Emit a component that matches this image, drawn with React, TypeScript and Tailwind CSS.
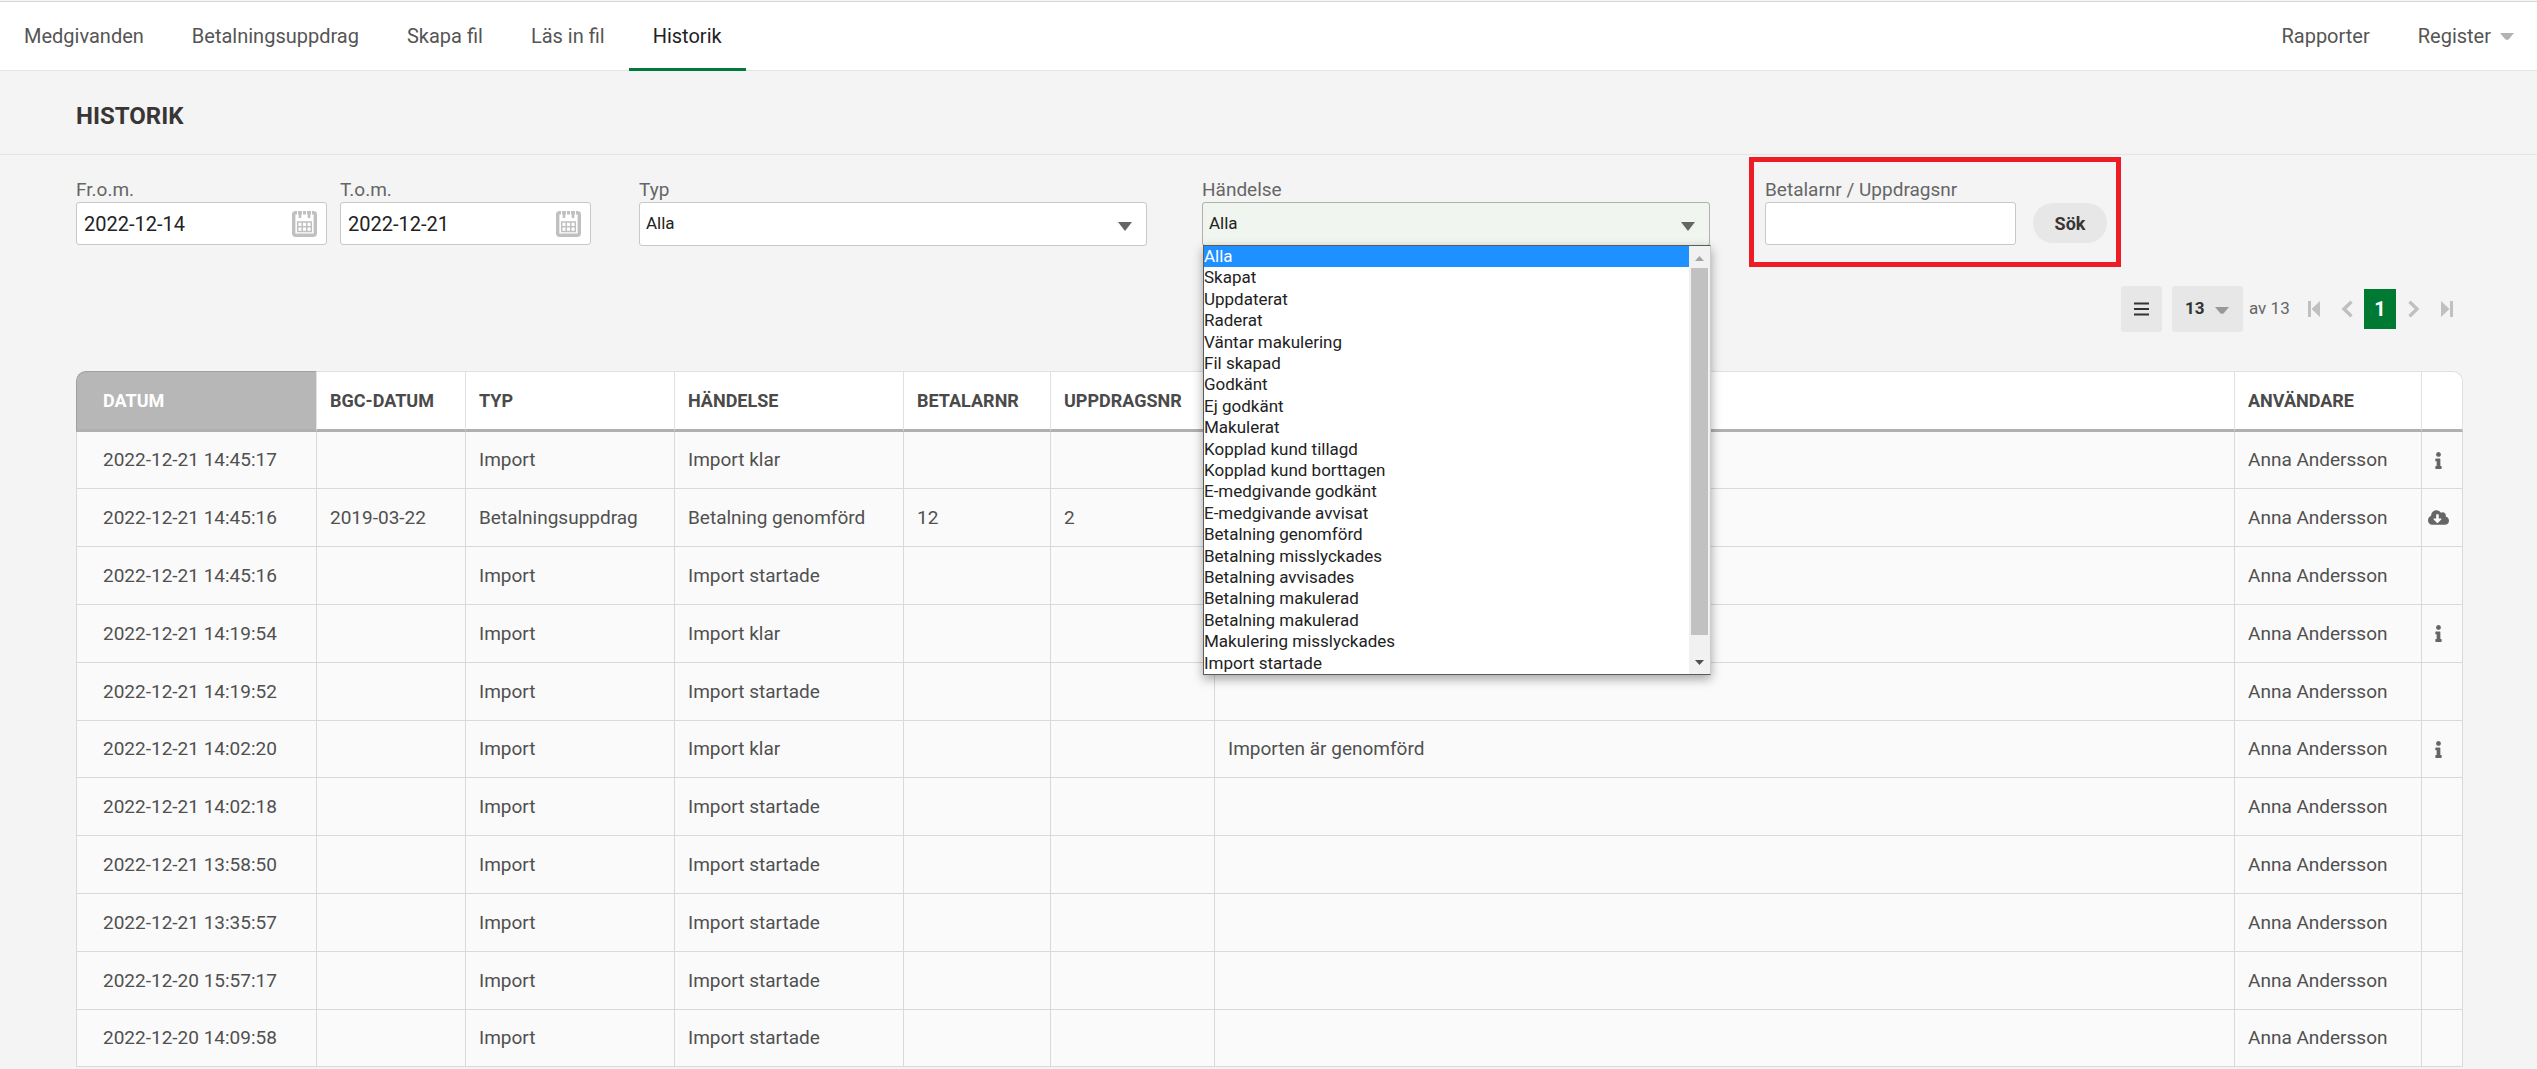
import type { ReactNode } from "react";
import { FaInfo, FaCloudDownloadAlt } from "react-icons/fa";

type Row = {
  date: string;
  bgc?: string;
  type: string;
  event: string;
  payer?: string;
  order?: string;
  message?: string;
  icon?: "info" | "download";
};

const rows: Row[] = [
  { date: "2022-12-21 14:45:17", type: "Import", event: "Import klar", icon: "info" },
  { date: "2022-12-21 14:45:16", bgc: "2019-03-22", type: "Betalningsuppdrag", event: "Betalning genomförd", payer: "12", order: "2", icon: "download" },
  { date: "2022-12-21 14:45:16", type: "Import", event: "Import startade" },
  { date: "2022-12-21 14:19:54", type: "Import", event: "Import klar", icon: "info" },
  { date: "2022-12-21 14:19:52", type: "Import", event: "Import startade" },
  { date: "2022-12-21 14:02:20", type: "Import", event: "Import klar", message: "Importen är genomförd", icon: "info" },
  { date: "2022-12-21 14:02:18", type: "Import", event: "Import startade" },
  { date: "2022-12-21 13:58:50", type: "Import", event: "Import startade" },
  { date: "2022-12-21 13:35:57", type: "Import", event: "Import startade" },
  { date: "2022-12-20 15:57:17", type: "Import", event: "Import startade" },
  { date: "2022-12-20 14:09:58", type: "Import", event: "Import startade" },
];

const events = [
  "Alla", "Skapat", "Uppdaterat", "Raderat", "Väntar makulering", "Fil skapad", "Godkänt",
  "Ej godkänt", "Makulerat", "Kopplad kund tillagd", "Kopplad kund borttagen",
  "E-medgivande godkänt", "E-medgivande avvisat", "Betalning genomförd",
  "Betalning misslyckades", "Betalning avvisades", "Betalning makulerad",
  "Betalning makulerad", "Makulering misslyckades", "Import startade",
];

const navItems = ["Medgivanden", "Betalningsuppdrag", "Skapa fil", "Läs in fil"];

function Caret({ className }: { className: string }) {
  return (
    <svg viewBox="0 0 16 8" className={className} fill="currentColor" aria-hidden="true">
      <path d="M0 0h16L10 7Q8 8.600 6 7Z" />
    </svg>
  );
}

function CalendarIcon() {
  return (
    <svg viewBox="0 0 25 26" className="h-[26px] w-[25px]" fill="none" stroke="#c0c0c0" aria-hidden="true">
      <rect x="1.700" y="1.700" width="21.600" height="22.600" rx="2" strokeWidth="3.400" />
      <path d="M5.500 0v5M10.500 0v5M14.500 0v5M19.500 0v5" stroke="#fff" strokeWidth="1" />
      <path d="M8 2v5M17 2v5" strokeWidth="2.600" />
      <path d="M5.700 11h13.600v9.500H5.700zM5.700 15.700h13.600M10.200 11v9.500M14.800 11v9.500" strokeWidth="1.500" />
    </svg>
  );
}

function DateField({ id, label, value }: { id: string; label: string; value: string }) {
  return (
    <div className="w-[251px] shrink-0">
      <label htmlFor={id} className="block text-[19px] leading-6 text-[#666]">{label}</label>
      <div className="relative">
        <input
          id={id}
          defaultValue={value}
          className="block h-[43px] w-full rounded-[3px] border border-[#c8c8c8] bg-white pl-[7px] text-[20px] text-[#222]"
        />
        <button type="button" aria-label={`Välj datum ${label}`} className="absolute top-[9px] right-[10px]">
          <CalendarIcon />
        </button>
      </div>
    </div>
  );
}

function SelectField({ id, label, open, children }: { id: string; label: string; open?: boolean; children?: ReactNode }) {
  return (
    <div>
      <label htmlFor={id} className="block text-[19px] leading-6 text-[#666]">{label}</label>
      <div className="relative">
        <select
          id={id}
          className={
            "block h-11 w-full appearance-none rounded-[3px] border pl-[6px] text-[17px] text-[#222] " +
            (open ? "border-[#b0b0b0] bg-[#f0f5ef]" : "border-[#c8c8c8] bg-white")
          }
        >
          <option>Alla</option>
        </select>
        <svg viewBox="0 0 14 9" className="pointer-events-none absolute top-[20px] right-[15px] h-[9px] w-[14px]" aria-hidden="true">
          <path d="M0 0h14L7 9Z" fill="#666" />
        </svg>
        {children}
      </div>
    </div>
  );
}

function EventList() {
  return (
    <div className="absolute top-[43px] -right-px left-px z-10 flex h-[430px] border border-[#5c5c5c] border-r-[#ccc] bg-white shadow-[0_4px_10px_rgba(0,0,0,0.35)]">
      <ul role="listbox" aria-label="Händelse" className="grid flex-1 grid-rows-[repeat(20,minmax(0,1fr))] text-[17px] leading-[21px] text-[#222]">
        {events.map((e, i) => (
          <li
            key={i}
            role="option"
            aria-selected={i === 0}
            className={i === 0 ? "bg-[#1e90ff] text-white" : ""}
          >
            {e}
          </li>
        ))}
      </ul>
      <div className="flex w-[21px] flex-col items-center justify-between bg-[#f1f1f1]">
        <svg viewBox="0 0 9 5" className="mt-[10px] mb-[7px] h-[5px] w-[9px]" aria-hidden="true"><path d="M0 5h9L4.500 0Z" fill="#a3a3a3" /></svg>
        <div className="w-[17px] flex-1 bg-[#c1c1c1]" />
        <svg viewBox="0 0 9 5" className="mt-[25px] mb-[9px] h-[5px] w-[9px]" aria-hidden="true"><path d="M0 0h9L4.500 5Z" fill="#505050" /></svg>
      </div>
    </div>
  );
}

function Nav() {
  return (
    <nav className="mt-px flex h-[70px] justify-between border-t border-b border-t-[#d8d8d8] border-b-[#e4e4e4] bg-white text-[20px] text-[#555]">
      <div className="flex">
        {navItems.map((n) => (
          <a key={n} href="#" className="px-6 pt-[18px] leading-8">{n}</a>
        ))}
        <a href="#" aria-current="page" className="-mb-px border-b-3 border-[#007a3d] px-6 pt-[18px] leading-8 text-[#222]">Historik</a>
      </div>
      <div className="flex">
        <a href="#" className="px-6 pt-[18px] leading-8">Rapporter</a>
        <a href="#" className="flex items-start pt-[18px] pr-[22px] pl-6 leading-8">
          Register
          <Caret className="mt-[13px] ml-2 h-[7px] w-4 text-[#b3b3b3]" />
        </a>
      </div>
    </nav>
  );
}

function Pager() {
  const icon = "h-[18px] text-[#c0c0c0]";
  return (
    <div className="mt-10 flex h-[46px] items-center justify-end pr-[10px]">
      <button type="button" aria-label="Kolumner" className="flex h-full w-[41px] items-center justify-center rounded-[3px] bg-[#e7e7e7]">
        <svg viewBox="0 0 15 14" className="h-[14px] w-[15px]" aria-hidden="true">
          <path d="M0 1.500h15M0 7h15M0 12.500h15" stroke="#333" strokeWidth="2.200" />
        </svg>
      </button>
      <div className="relative ml-[10px] h-full w-[71px]">
        <select aria-label="Rader per sida" className="h-full w-full appearance-none rounded-[3px] bg-[#e7e7e7] pl-[13px] text-[17px] font-bold text-[#333]">
          <option>13</option>
        </select>
        <Caret className="pointer-events-none absolute top-[21px] right-[13px] h-[7px] w-4 text-[#999]" />
      </div>
      <span className="ml-[6px] w-[53px] text-[17px] text-[#666]">av 13</span>
      <button type="button" aria-label="Första sidan" className="ml-[6px]">
        <svg viewBox="0 0 12 18" className={icon} fill="currentColor"><path d="M0 1h3v16H0zM12 1v16L3.500 9Z" /></svg>
      </button>
      <button type="button" aria-label="Föregående sida" className="ml-[21px]">
        <svg viewBox="0 0 12 18" className={icon} fill="none" stroke="currentColor" strokeWidth="3.400"><path d="M10.500 1.800 3 9l7.500 7.200" /></svg>
      </button>
      <button type="button" aria-current="page" className="ml-[11px] h-10 w-8 bg-[#007a33] text-[20px] font-bold text-white">1</button>
      <button type="button" aria-label="Nästa sida" className="ml-3">
        <svg viewBox="0 0 12 18" className={icon} fill="none" stroke="currentColor" strokeWidth="3.400"><path d="M1.500 1.800 9 9l-7.500 7.200" /></svg>
      </button>
      <button type="button" aria-label="Sista sidan" className="ml-[21px]">
        <svg viewBox="0 0 12 18" className={icon} fill="currentColor"><path d="M9 1h3v16H9zM0 1v16L8.500 9Z" /></svg>
      </button>
    </div>
  );
}

const th = "border-t border-r border-b-3 border-[#e0e0e0] border-b-[#b0b0b0] bg-white pl-[13px] text-left";
const td = "border-r border-b border-[#d9d9d9] bg-[#fafafa] pl-[13px]";

function HistoryTable() {
  return (
    <table className="mt-[39px] w-full table-fixed border-separate border-spacing-0 text-[19px] leading-6 text-[#505050]">
      <colgroup>
        <col className="w-[241px]" />
        <col className="w-[149px]" />
        <col className="w-[209px]" />
        <col className="w-[229px]" />
        <col className="w-[147px]" />
        <col className="w-[164px]" />
        <col />
        <col className="w-[187px]" />
        <col className="w-[41px]" />
      </colgroup>
      <thead className="text-[18px] text-[#4a4a4a]">
        <tr className="h-[61px]">
          <th className="rounded-tl-[10px] border-t border-r border-b-3 border-l border-[#a0a0a0] border-r-[#e2e2e2] border-b-[#b0b0b0] bg-[#b7b7b7] pl-[26px] text-left text-white">DATUM</th>
          <th className={th}>BGC-DATUM</th>
          <th className={th}>TYP</th>
          <th className={th}>HÄNDELSE</th>
          <th className={th}>BETALARNR</th>
          <th className={th}>UPPDRAGSNR</th>
          <th className={th} />
          <th className={th}>ANVÄNDARE</th>
          <th className="rounded-tr-[10px] border-t border-r border-b-3 border-[#e0e0e0] border-b-[#b0b0b0] bg-white" />
        </tr>
      </thead>
      <tbody>
        {rows.map((r, i) => (
          <tr key={i} className="h-[58px] nth-[5n+1]:h-[57px]">
            <td className="border-r border-b border-l border-[#d9d9d9] bg-[#fafafa] pl-[26px]">{r.date}</td>
            <td className={td}>{r.bgc}</td>
            <td className={td}>{r.type}</td>
            <td className={td}>{r.event}</td>
            <td className={td}>{r.payer}</td>
            <td className={td}>{r.order}</td>
            <td className={td}>{r.message}</td>
            <td className={td}>Anna Andersson</td>
            <td className="border-r border-b border-[#d9d9d9] bg-[#fafafa] pr-[7px]">
              {r.icon === "info" && <FaInfo className="mx-auto text-[17px] text-[#666]" />}
              {r.icon === "download" && <FaCloudDownloadAlt className="mx-auto text-[21px] text-[#666]" />}
            </td>
          </tr>
        ))}
      </tbody>
    </table>
  );
}

export default function App() {
  return (
    <div className="flow-root min-h-screen bg-[#f4f4f4] font-['Roboto',sans-serif]">
      <Nav />
      <header className="flex h-[84px] items-center border-b border-[#e4e4e4] px-[76px] pt-[6px]">
        <h1 className="text-[24px] font-bold text-[#3a3535]">HISTORIK</h1>
      </header>
      <main className="pt-[23px] pr-[74px] pl-[76px]">
        <form className="grid grid-cols-[repeat(4,minmax(0,508px))] gap-x-[55px]" onSubmit={(e) => e.preventDefault()}>
          <div className="flex gap-[13px]">
            <DateField id="from" label="Fr.o.m." value="2022-12-14" />
            <DateField id="to" label="T.o.m." value="2022-12-21" />
          </div>
          <SelectField id="type" label="Typ" />
          <SelectField id="event" label="Händelse" open>
            <EventList />
          </SelectField>
          <div className="flex items-start">
            <div className="relative flex items-end gap-[17px]">
              <div className="w-[251px]">
                <label htmlFor="search" className="block text-[19px] leading-6 text-[#666]">Betalarnr / Uppdragsnr</label>
                <input id="search" className="block h-[43px] w-full rounded-[3px] border border-[#c8c8c8] bg-white px-2 text-[20px]" />
              </div>
              <button type="submit" className="mb-[2px] h-10 w-[74px] rounded-full bg-[#e7e7e7] text-[18px] font-bold text-[#3a3535]">Sök</button>
              <div className="pointer-events-none absolute -top-[21px] -right-[14px] -bottom-[22px] -left-4 border-5 border-[#ee1c25]" />
            </div>
          </div>
        </form>
        <Pager />
        <HistoryTable />
      </main>
    </div>
  );
}
